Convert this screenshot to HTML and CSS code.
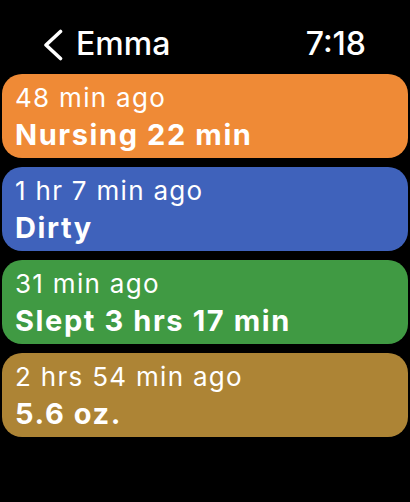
FILE: index.html
```html
<!DOCTYPE html>
<html lang="en">
<head>
    <meta charset="UTF-8">
    <meta name="viewport" content="width=device-width, initial-scale=1.0">
    <title>Emma</title>
    <link rel="stylesheet" href="styles.css">
</head>
<body>
    <header class="top-bar">
        <a class="back" href="#">
            <svg class="chevron" width="20" height="32" viewBox="0 0 20 32">
                <path d="M17.5 2.5 L3 16 L17.5 29.5" fill="none" stroke="#fff" stroke-width="3.6" stroke-linecap="round" stroke-linejoin="round"/>
            </svg>
            <span class="title">Emma</span>
        </a>
        <span class="clock">7:18</span>
    </header>

    <main class="entries">
        <div class="entry nursing">
            <div class="entry-time">48 min ago</div>
            <div class="entry-label">Nursing 22 min</div>
        </div>
        <div class="entry diaper">
            <div class="entry-time">1 hr 7 min ago</div>
            <div class="entry-label">Dirty</div>
        </div>
        <div class="entry sleep">
            <div class="entry-time">31 min ago</div>
            <div class="entry-label">Slept 3 hrs 17 min</div>
        </div>
        <div class="entry bottle">
            <div class="entry-time">2 hrs 54 min ago</div>
            <div class="entry-label">5.6 oz.</div>
        </div>
    </main>
</body>
</html>
```

FILE: styles.css
```css
/* Watch style, black background */
body {
    margin: 0;
    background-color: #000;
    color: #fff;
    font-family: Inter, "Noto Sans", sans-serif;
}
.top-bar {
    display: flex;
    justify-content: space-between;
    align-items: center;
    padding: 25px 44px 11px 43px;
    height: 38px;
}
.back {
    display: flex;
    align-items: center;
    gap: 13px;
    color: #fff;
    text-decoration: none;
}
.chevron {
    display: block;
    margin-top: 2px;
}
.title, .clock {
    font-size: 32px;
    line-height: 38px;
    font-weight: 500;
}
.entries {
    display: flex;
    flex-direction: column;
    gap: 9px;
    padding: 0 2px;
}
.entry {
    border-radius: 20px;
    padding: 8px 13px 5px;
}
.entry-time {
    font-size: 26px;
    line-height: 32px;
    letter-spacing: 1.3px;
}
.entry-label {
    font-size: 29px;
    line-height: 36px;
    font-weight: 700;
    letter-spacing: 1.6px;
    margin-top: 3px;
}
.nursing {
    background-color: #ef8a36;
}
.diaper {
    background-color: #3f62bb;
}
.sleep {
    background-color: #409a43;
}
.bottle {
    background-color: #ad8435;
}
```
